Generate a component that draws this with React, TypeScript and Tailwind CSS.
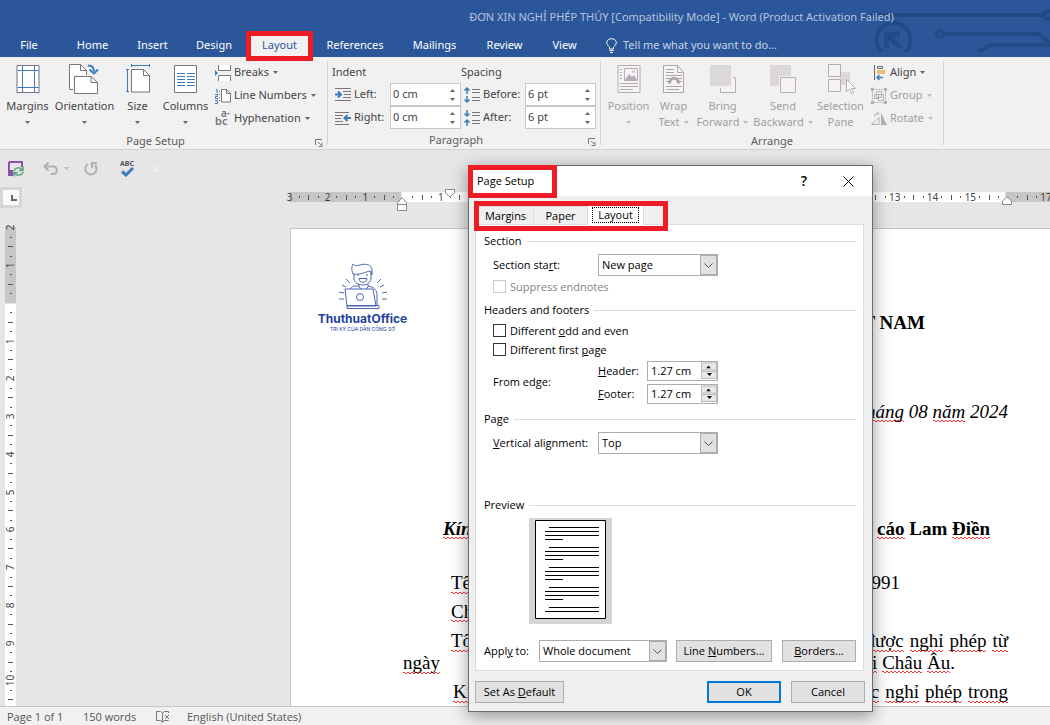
import type { ReactNode } from "react";

const menuTabs = [
  { name: "File", width: "w-[58px] mr-1" },
  { name: "Home", width: "w-[61px]" },
  { name: "Insert", width: "w-[59px]" },
  { name: "Design", width: "w-[64px]" },
  { name: "Layout", width: "w-[67px]" },
  { name: "References", width: "w-[84px]" },
  { name: "Mailings", width: "w-[75px]" },
  { name: "Review", width: "w-[65px]" },
  { name: "View", width: "w-[55px]" },
];

const rulerTop = ["3", "2", "1", "", "1", "2", "3", "4", "5", "6", "7", "8", "9", "10", "11", "12", "13", "14", "15", "", "17"];
const rulerSide = ["2", "1", "", "1", "2", "3", "4", "5", "6", "7", "8", "9", "10"];

function Caret({ className = "text-[#666]" }: { className?: string }) {
  return (
    <svg className={`inline-block h-[3px] w-[5px] shrink-0 ${className}`} viewBox="0 0 5 3">
      <path d="M0 0h5L2.5 3z" fill="currentColor" />
    </svg>
  );
}

function Launcher() {
  return (
    <svg className="h-2 w-2" viewBox="0 0 8 8" fill="none" stroke="#777">
      <path d="M.5 6V.5H7M3 3l3 3M7 3.5V7.5H3.5" />
    </svg>
  );
}

/* ---------- ribbon ---------- */

function Group({ title, width, launcher, children }: { title: string; width: string; launcher?: boolean; children: ReactNode }) {
  return (
    <section className={`flex shrink-0 flex-col border-r border-[#d2d2d2] ${width}`}>
      <div className="flex h-[71px]">{children}</div>
      <div className="relative mt-[1px] flex h-4 items-center justify-center pt-1 text-[#5c5c5c]">
        <span className={launcher ? "pr-4" : ""}>{title}</span>
        {launcher && (
          <button aria-label={`${title} settings`} className="absolute right-1 top-2 flex">
            <Launcher />
          </button>
        )}
      </div>
    </section>
  );
}

function BigButton({ icon, label, second, width, disabled, noCaret }: {
  icon: ReactNode;
  label: string;
  second?: string;
  width: string;
  disabled?: boolean;
  noCaret?: boolean;
}) {
  return (
    <button
      disabled={disabled}
      className={`flex shrink-0 flex-col items-center whitespace-nowrap pt-[3px] ${width} ${disabled ? "text-[#a19fa1]" : "text-[#444]"}`}
    >
      <span className="h-8">{icon}</span>
      <span className="mt-[2px] h-4 leading-4">{label}</span>
      <span className="flex h-4 items-center justify-center gap-1 leading-4">
        {second}
        {!noCaret && <Caret className={disabled ? "text-[#bbb]" : "text-[#666]"} />}
      </span>
    </button>
  );
}

function SmallButton({ icon, label, disabled }: { icon: ReactNode; label: string; disabled?: boolean }) {
  return (
    <button disabled={disabled} className={`flex h-[23px] items-center whitespace-nowrap ${disabled ? "text-[#a19fa1]" : "text-[#444]"}`}>
      <span className="mr-[2px] w-[17px]">{icon}</span>
      {label}
      <Caret className={disabled ? "ml-1 text-[#bbb]" : "ml-1 text-[#666]"} />
    </button>
  );
}

function RibbonSpin({ icon, label, value, id, labelWidth }: { icon: ReactNode; label: string; value: string; id: string; labelWidth: string }) {
  return (
    <div className="flex h-[23px] items-center">
      {icon}
      <label htmlFor={id} className={`ml-[3px] ${labelWidth}`}>
        {label}
      </label>
      <div className="flex h-[23px] w-[71px] items-center border border-[#c6c6c6] bg-white">
        <input id={id} defaultValue={value} className="w-[59px] pl-[2px] text-[#444] outline-none" />
        <span className="flex flex-col gap-[6px] text-[#666]">
          <button aria-label={`Increase ${label}`} className="flex rotate-180">
            <Caret />
          </button>
          <button aria-label={`Decrease ${label}`} className="flex">
            <Caret />
          </button>
        </span>
      </div>
    </div>
  );
}

function MarginsIcon() {
  return (
    <svg className="h-8 w-8" viewBox="0 0 32 32" fill="none">
      <path d="M5 1.5h22v27H5z" fill="#fff" stroke="#777" />
      <path d="M10.5 2v26M22.5 2v26M5.5 6.5h21M5.5 23.5h21" stroke="#3f7abf" />
    </svg>
  );
}

function OrientationIcon() {
  return (
    <svg className="h-8 w-8" viewBox="0 0 32 32" fill="none">
      <path d="M.5.5h11l6 6V25.500H.5z" fill="#fff" stroke="#777" />
      <path d="M11.500.5v6h6" stroke="#777" />
      <path d="M4 11h19v20H4z" fill="#f1f1f1" />
      <path d="M5.500 12.500H22l6.500 6V29.500h-23z" fill="#fff" stroke="#777" />
      <path d="M22 12.500v6h6.500" stroke="#777" />
      <path d="M19 1.500c4 0 6 2 6 6" stroke="#3f7abf" strokeWidth="2" />
      <path d="M20.500 5.500l4.500 4 4-4" stroke="#3f7abf" strokeWidth="2" />
    </svg>
  );
}

function SizeIcon() {
  return (
    <svg className="h-8 w-8" viewBox="0 0 32 32" fill="none">
      <path d="M9.500 5.500h12l6 6v16.500h-18z" fill="#fff" stroke="#777" />
      <path d="M21.500 5.500v6h6" stroke="#777" />
      <path d="M9.500 1.500h18M9.500 0v3M27.500 0v3M5.500 5.500v22M4 5.500h3M4 27.500h3" stroke="#3f7abf" />
    </svg>
  );
}

function ColumnsIcon() {
  return (
    <svg className="h-8 w-8" viewBox="0 0 32 32" fill="none">
      <path d="M4.500 1.500h22v27h-22z" fill="#fff" stroke="#777" />
      <path d="M7 9.500h8M7 12.500h8M7 15.500h8M7 18.500h8M7 21.500h8M17 9.500h8M17 12.500h8M17 15.500h8M17 18.500h8M17 21.500h8" stroke="#3f7abf" />
    </svg>
  );
}

function BreaksIcon() {
  return (
    <svg className="h-4 w-4" viewBox="0 0 16 16" fill="none">
      <path d="M3.500 0v5.500h12V0M3.500 16v-5.500h12V16" fill="#fff" stroke="#777" />
      <path d="M0 5v6l3-3z" fill="#3f7abf" />
    </svg>
  );
}

function LineNumbersIcon() {
  return (
    <svg className="h-4 w-4" viewBox="0 0 16 16" fill="none">
      <path d="M6.500 1.500h5l4 4v8.500h-9z" fill="#fff" stroke="#777" />
      <path d="M11.500 1.500v4h4" stroke="#777" />
      <path d="M1 1.500h1V5M0 6.500h2.500v2H.5V10.500H3M0 12.500h2.500v3H0" stroke="#3f7abf" />
      <path d="M4.500 3v12" stroke="#777" strokeDasharray="1 2" />
    </svg>
  );
}

function HyphenationIcon() {
  return (
    <span className="relative block h-4 w-4 text-[11px] font-semibold leading-3 text-[#777]">
      <span className="absolute left-0 top-1">bc</span>
      <span className="absolute left-[6px] -top-1 text-[10px]">a-</span>
    </span>
  );
}

function IndentIcon({ right }: { right?: boolean }) {
  return (
    <svg className="h-4 w-4" viewBox="0 0 16 16" fill="none">
      {right ? (
        <>
          <path d="M0 2.500h14M0 5.500h8M0 8.500h6M0 11.500h8M0 14.500h14" stroke="#777" />
          <path d="M16 8h-5M12.500 5L9.500 8l3 3" stroke="#3f7abf" strokeWidth="2" />
        </>
      ) : (
        <>
          <path d="M0 1.500h16M8 4.500h8M9 7.500h7M8 10.500h8M0 13.500h16" stroke="#777" />
          <path d="M0 7.500h5M3 4.500l3 3-3 3" stroke="#3f7abf" strokeWidth="2" />
        </>
      )}
    </svg>
  );
}

function SpacingIcon({ after }: { after?: boolean }) {
  return (
    <svg className="h-4 w-4" viewBox="0 0 16 16" fill="none">
      <path d="M8 2.500h8M8 5.500h8M8 10.500h8M8 13.500h8" stroke="#777" />
      {after ? (
        <path d="M3 0v6M.5 3.500L3 6l2.500-2.500M3 16v-6M.5 12.500L3 10l2.500 2.500" stroke="#3f7abf" strokeWidth="1.500" />
      ) : (
        <path d="M3 1v6M.5 3.500L3 1l2.500 2.500M3 9v6M.5 12.500L3 15l2.500-2.500" stroke="#3f7abf" strokeWidth="1.500" />
      )}
    </svg>
  );
}

function PositionIcon() {
  return (
    <svg className="h-8 w-8" viewBox="0 0 32 32" fill="none" stroke="#b3aeb3">
      <path d="M5 1.500h22v27H5z" fill="#f6f2f6" />
      <path d="M11.500 4.500h13v12h-13z" />
      <path d="M12 16l4-6 3 3 2-2 3 5z" fill="#b3aeb3" stroke="none" />
      <circle cx="20.500" cy="7.500" r="1" />
      <path d="M7 5.500h2M7 8.500h2M7 11.500h2M7 14.500h2M7 19.500h18M7 22.500h18M7 25.500h13" />
    </svg>
  );
}

function WrapIcon() {
  return (
    <svg className="h-8 w-8" viewBox="0 0 32 32" fill="none" stroke="#aba7ab">
      <path d="M5.500 1.500h14l6 7v20h-20z" fill="#f6f2f6" />
      <path d="M19.500 1.500v7h6" />
      <path d="M8 5.500h8M8 8.500h8M8 11.500h16M8 14.500h4M20 14.500h4M8 17.500h3M21 17.500h3M8 22.500h16M8 25.500h13" />
      <path d="M11.500 19.500c0-7 9-7 9 0" strokeWidth="3" />
    </svg>
  );
}

function BringIcon() {
  return (
    <svg className="h-8 w-8" viewBox="0 0 32 32" fill="none">
      <path d="M13.500 13.500h15v15h-15z" fill="#f6f2f6" stroke="#b3aeb3" />
      <path d="M2 0h24v24H2z" fill="#f1f1f1" />
      <path d="M3 1h21v21H3z" fill="#dcd7db" />
    </svg>
  );
}

function SendIcon() {
  return (
    <svg className="h-8 w-8" viewBox="0 0 32 32" fill="none">
      <path d="M3 1h21v21H3z" fill="#dcd7db" />
      <path d="M12 12h18v18H12z" fill="#f1f1f1" />
      <path d="M13.500 13.500h15v15h-15z" fill="#f6f2f6" stroke="#b3aeb3" />
    </svg>
  );
}

function SelectionIcon() {
  return (
    <svg className="h-8 w-8" viewBox="0 0 32 32" fill="none" stroke="#b3aeb3">
      <path d="M12 8h13v13H15v-8h-3z" fill="#dcd7db" stroke="none" />
      <path d="M3.500.5h12v12h-12zM3.500 15.500h12v12h-12z" fill="#f6f2f6" />
      <path d="M21.500 15.500v12l3-2.500 2 4.500 2-1-2-4h4z" fill="#fff" />
    </svg>
  );
}

function AlignIcon() {
  return (
    <svg className="h-4 w-4" viewBox="0 0 16 16" fill="none">
      <path d="M3.500 0v15" stroke="#666" />
      <path d="M6.500 1.500h5v2h-5z" stroke="#666" />
      <path d="M6 5h8v4H6z" fill="#eabf76" />
      <path d="M12 12.500H6M8.500 10L6 12.500 8.500 15" stroke="#3f7abf" strokeWidth="1.500" />
    </svg>
  );
}

function GroupIcon() {
  return (
    <svg className="h-4 w-4" viewBox="0 0 16 16" fill="none" stroke="#b3aeb3">
      <path d="M1.500 1.500h13v13h-13z" strokeDasharray="2 1" />
      <path d="M5.500 3.500h5v6h-5zM7.500 6.500h5v6h-5zM3.500 6.500h4v4h-4z" />
      <path d="M0 0h3v3H0zM13 0h3v3h-3zM0 13h3v3H0zM13 13h3v3h-3z" fill="#b3aeb3" stroke="none" />
    </svg>
  );
}

function RotateIcon() {
  return (
    <svg className="h-4 w-4" viewBox="0 0 16 16" fill="none" stroke="#b3aeb3">
      <path d="M.5 13.500h7.500v-7z" />
      <path d="M10 2v12h6z" fill="#b3aeb3" stroke="none" />
      <path d="M3.500 6c0-3 1-3.500 4-3.500M6 .5l2 2-2 2" />
    </svg>
  );
}

function Header() {
  return (
    <header className="relative h-[57px] shrink-0 bg-[#2b579a] text-white">
      <svg className="absolute right-0 top-0 h-[52px] w-[180px]" viewBox="0 0 180 52" fill="none" stroke="#234a86" strokeWidth="4">
        <circle cx="23.500" cy="40" r="17" />
        <path d="M16 34.500h14M16.500 33v15M17 35l14 13" strokeWidth="5" />
        <circle cx="3" cy="15" r="3" fill="#234a86" stroke="none" />
        <path d="M3 15h172" />
        <circle cx="178" cy="15" r="4" />
        <circle cx="69.500" cy="34" r="3.500" strokeWidth="3" />
        <path d="M73 34h95l14 10M108 52l12-7h60" />
      </svg>
      <div className="relative flex h-[31px] items-center justify-center whitespace-nowrap pl-[313px] pt-[3px] text-[#b3c4de]">
        ĐƠN XIN NGHỈ PHÉP THÚY [Compatibility Mode] - Word (Product Activation Failed)
      </div>
      <nav className="relative flex h-[26px]">
        {menuTabs.map((tab) =>
          tab.name === "Layout" ? (
            <button key={tab.name} className={`z-10 h-[30px] shrink-0 border-5 border-[#ee1c24] bg-[#f1f1f1] pb-[2px] text-[#2b579a] ${tab.width}`}>
              {tab.name}
            </button>
          ) : (
            <button key={tab.name} className={`h-7 shrink-0 ${tab.width}`}>
              {tab.name}
            </button>
          )
        )}
        <button className="ml-[14px] flex h-7 items-center gap-[6px] whitespace-nowrap text-[#c5d2e6]">
          <svg className="h-[15px] w-[11px]" viewBox="0 0 11 15" fill="none" stroke="#fff">
            <path d="M3.500 11V9C.5 6.500.5 4.500 1 3.500 2-.2 9-.2 10 3.500c.5 1 .5 3-2.500 5.500v2zM3.500 12.500h4M4 14.500h3" />
          </svg>
          Tell me what you want to do...
        </button>
      </nav>
    </header>
  );
}

function Ribbon() {
  return (
    <div className="flex h-[93px] shrink-0 border-b border-[#d2d2d2] bg-[#f1f1f1] pb-1 pt-1 text-[#444]">
      <Group title="Page Setup" width="w-[328px]" launcher>
        <BigButton icon={<MarginsIcon />} label="Margins" width="w-[55px]" />
        <BigButton icon={<OrientationIcon />} label="Orientation" width="w-[59px]" />
        <BigButton icon={<SizeIcon />} label="Size" width="w-[47px]" />
        <BigButton icon={<ColumnsIcon />} label="Columns" width="w-[49px]" />
        <div className="ml-[5px] flex flex-col">
          <SmallButton icon={<BreaksIcon />} label="Breaks" />
          <SmallButton icon={<LineNumbersIcon />} label="Line Numbers" />
          <SmallButton icon={<HyphenationIcon />} label="Hyphenation" />
        </div>
      </Group>
      <Group title="Paragraph" width="w-[273px]" launcher>
        <div className="flex w-[133px] flex-col pl-[7px]">
          <h3 className="-ml-[3px] h-[22px] leading-[22px]">Indent</h3>
          <RibbonSpin id="indent-left" icon={<IndentIcon />} label="Left:" value="0 cm" labelWidth="w-[36px]" />
          <RibbonSpin id="indent-right" icon={<IndentIcon right />} label="Right:" value="0 cm" labelWidth="w-[36px]" />
        </div>
        <div className="flex flex-col pl-[3px]">
          <h3 className="-ml-[3px] h-[22px] leading-[22px]">Spacing</h3>
          <RibbonSpin id="space-before" icon={<SpacingIcon />} label="Before:" value="6 pt" labelWidth="w-[42px]" />
          <RibbonSpin id="space-after" icon={<SpacingIcon after />} label="After:" value="6 pt" labelWidth="w-[42px]" />
        </div>
      </Group>
      <Group title="Arrange" width="w-[343px]">
        <BigButton icon={<PositionIcon />} label="Position" width="w-[55px]" disabled />
        <BigButton icon={<WrapIcon />} label="Wrap" second="Text" width="w-[35px]" disabled />
        <BigButton icon={<BringIcon />} label="Bring" second="Forward" width="w-[63px]" disabled />
        <BigButton icon={<SendIcon />} label="Send" second="Backward" width="w-[58px]" disabled />
        <BigButton icon={<SelectionIcon />} label="Selection" second="Pane" width="w-[57px]" disabled noCaret />
        <div className="ml-[2px] flex flex-col">
          <SmallButton icon={<AlignIcon />} label="Align" />
          <SmallButton icon={<GroupIcon />} label="Group" disabled />
          <SmallButton icon={<RotateIcon />} label="Rotate" disabled />
        </div>
      </Group>
    </div>
  );
}

function QuickAccess() {
  return (
    <div className="flex h-[37px] shrink-0 items-center pl-2">
      <button aria-label="Save">
        <svg className="h-4 w-4" viewBox="0 0 16 16" fill="none">
          <path d="M1 1h13v5M1 1v13h4" stroke="#8a50ab" strokeWidth="2" />
          <path d="M2 9h3v5H2z" fill="#8a50ab" />
          <path d="M6 10c1-4 7-4 8-1M15 5.500V9.500h-4M15 11c-1 4-7 4-8 1M6 15.500v-4h4" stroke="#5fa582" strokeWidth="1.500" />
        </svg>
      </button>
      <button aria-label="Undo" className="ml-[19px] flex items-center gap-[5px]">
        <svg className="h-4 w-4" viewBox="0 0 16 16" fill="none" stroke="#b1b1b1" strokeWidth="2">
          <path d="M5.500 1.500L1.500 5.500l4 4M1.500 5.500H10c5 0 5 7.500 0 7.500H8" />
        </svg>
        <Caret className="text-[#bbb]" />
      </button>
      <button aria-label="Repeat" className="ml-[14px]">
        <svg className="h-4 w-4" viewBox="0 0 16 16" fill="none" stroke="#b1b1b1" strokeWidth="2">
          <path d="M5 3a5.600 5.600 0 1 0 7 1M9 7V2h5" />
        </svg>
      </button>
      <button aria-label="Spelling" className="ml-5 flex w-4 flex-col items-center text-[7px] font-bold leading-[7px] text-[#555]">
        ABC
        <svg className="h-[10px] w-[13px]" viewBox="0 0 13 10" fill="none">
          <path d="M1 4.500l4 3.500 7-7" stroke="#3f7abf" strokeWidth="3" />
        </svg>
      </button>
      <button aria-label="Customize" className="ml-[18px] flex flex-col items-center gap-[2px]">
        <span className="h-px w-[5px] bg-[#f4f4f4]" />
        <Caret className="text-[#f4f4f4]" />
      </button>
    </div>
  );
}

/* ---------- rulers ---------- */

function TopRuler() {
  return (
    <div className="flex h-[21px] shrink-0 items-start">
      <button aria-label="Tab stop" className="flex h-[21px] w-[22px] shrink-0 items-center justify-center bg-[#d6d6d6]">
        <span className="flex h-[15px] w-4 items-end justify-end bg-[#fafafa] pb-1 pr-[2px]">
          <span className="h-[6px] w-[6px] border-b-2 border-l-2 border-[#666]" />
        </span>
      </button>
      <div className="relative ml-[263px] mt-[5px] h-[10px] min-w-0 flex-1 bg-[linear-gradient(to_right,#e6e6e6_4px,#c6c6c6_4px,#c6c6c6_116px,#fff_117px,#fff_720px,#c6c6c6_721px)]">
        <div className="flex h-[10px] w-[794px] text-[10px] leading-[10px] text-[#444]">
          {rulerTop.map((n, i) => (
            <div key={i} className="grid flex-1 basis-0 grid-cols-4 items-center">
              <span className="flex justify-center">{n}</span>
              <span className="h-[2px] w-px justify-self-center bg-[#555]" />
              <span className="h-[5px] w-px justify-self-center bg-[#555]" />
              <span className="h-[2px] w-px justify-self-center bg-[#555]" />
            </div>
          ))}
        </div>
        <svg className="absolute left-[112px] top-[5px] h-[14px] w-[10px]" viewBox="0 0 10 14" fill="#fff" stroke="#888">
          <path d="M.5 13.500v-8L5 .8l4.500 4.700v8zM.5 7.500h9" />
        </svg>
        <svg className="absolute left-[160px] -top-[3px] h-[9px] w-[10px]" viewBox="0 0 10 9" fill="#fff" stroke="#888">
          <path d="M.5.500h9v3.500L5 8 .5 4z" />
        </svg>
        <svg className="absolute left-[717px] top-1 h-[9px] w-[10px]" viewBox="0 0 10 9" fill="#fff" stroke="#888">
          <path d="M.5 8.500V5L5 .8 9.500 5v3.500z" />
        </svg>
      </div>
    </div>
  );
}

function SideRuler() {
  return (
    <div className="ml-[5px] mt-[19px] w-[11px] shrink-0 bg-[linear-gradient(to_bottom,#c6c6c6_76px,#fff_77px)]">
      <div className="-mt-1 flex h-[491px] flex-col text-[10px] leading-[9px] text-[#444]">
        {rulerSide.map((n, i) => (
          <div key={i} className="grid flex-1 basis-0 grid-rows-4 items-center justify-items-center">
            <span className="flex h-[9px] items-center -rotate-90">{n}</span>
            <span className="h-px w-[2px] bg-[#555]" />
            <span className="h-px w-[5px] bg-[#555]" />
            <span className="h-px w-[2px] bg-[#555]" />
          </div>
        ))}
      </div>
    </div>
  );
}

/* ---------- document ---------- */

// two offset rows of dashes make the spelling squiggle
function Typo({ children }: { children: ReactNode }) {
  return (
    <span className="bg-[linear-gradient(90deg,#f33_50%,transparent_50%),linear-gradient(90deg,transparent_50%,#f33_50%)] bg-[length:4px_1px,4px_1px] bg-[position:0_calc(100%_-_1px),0_100%] bg-repeat-x">
      {children}
    </span>
  );
}

function Logo() {
  return (
    <div className="flex w-[91px] flex-col items-center text-[#1c429c]">
      <svg className="h-[46px] w-12" viewBox="0 0 48 46" fill="none" stroke="#4a67b4">
        <path d="M14 11C12 6 13 3 14 1c2 2 3 2 7 1 6-2 12 0 12 5v5M14 11c8 1 12-2 17-3l2 4M15 11v5c1 7 15 9 17 0v-8" />
        <path d="M20 15.500h8c0 5-8 5-8 0zM18 12h2M27 12h2M20 21v3l5 4 4-4v-3M11 26c2-3 5-3 9-3M29 23c6 1 9 4 9 9v10" />
        <path d="M6 26h28l3 17H8zM8 42.500h32v3H8z" fill="#fff" />
        <circle cx="21" cy="34" r="3.500" />
        <path d="M7 16l4 4M3 22l4 2M0 29l5 1M0 36h5M42 16l-4 4M45 22l-4 2M48 29l-5 1M48 36h-5" />
      </svg>
      <span className="mt-[3px] font-['Inter',sans-serif] text-xs font-bold leading-[14px]">ThuthuatOffice</span>
      <span className="whitespace-nowrap font-['Inter',sans-serif] text-[5px] leading-[6px]">TRI KỶ CỦA DÂN CÔNG SỞ</span>
    </div>
  );
}

function Document() {
  return (
    <article className="ml-[274px] mt-5 min-w-0 flex-1 overflow-hidden border-l border-t border-[#c6c6c6] bg-white pl-[112px] pr-[42px] font-['Liberation_Serif',serif] text-[19px] leading-[22px] text-black">
      <div className="-ml-[86px] h-[83px] pt-[34px]">
        <Logo />
      </div>
      <h2 className="pr-[83px] text-right font-bold">VIỆT NAM</h2>
      <p className="mt-[67px] text-right italic">
        <Typo>tháng</Typo> 08 <Typo>năm</Typo> 2024
      </p>
      <h3 className="mt-[95px] flex justify-between pl-10 pr-[18px] font-bold">
        <i>
          <Typo>Kính</Typo>
        </i>
        <span>
          <Typo>Quảng</Typo> <Typo>cáo</Typo> Lam <Typo>Điền</Typo>
        </span>
      </h3>
      <p className="mt-8 flex justify-between pl-12 pr-[108px]">
        <Typo>Tên</Typo>
        <span>1991</span>
      </p>
      <p className="mt-[7px] pl-12">
        <Typo>Chị</Typo>
      </p>
      <p className="mt-[7px] flex justify-between pl-12">
        <Typo>Tôi</Typo>
        <span className="flex gap-[6px]">
          <Typo>được</Typo> <Typo>nghỉ</Typo> <Typo>phép</Typo> <Typo>từ</Typo>
        </span>
      </p>
      <p className="flex justify-between pr-[53px]">
        <Typo>ngày</Typo>
        <span>
          <Typo>tại</Typo> <Typo>Châu</Typo> <Typo>Âu</Typo>.
        </span>
      </p>
      <p className="mt-[7px] flex justify-between pl-[50px]">
        <Typo>Kí</Typo>
        <span className="flex gap-[6px]">
          <Typo>được</Typo> <Typo>nghỉ</Typo> <Typo>phép</Typo> <Typo>trong</Typo>
        </span>
      </p>
    </article>
  );
}

/* ---------- dialog ---------- */

const dialogButton = "h-[22px] border border-[#adadad] bg-[#e1e1e1]";

function Heading({ children }: { children: ReactNode }) {
  return (
    <h3 className="flex h-4 items-center gap-[5px]">
      {children}
      <span className="h-px flex-1 bg-[#dcdcdc]" />
    </h3>
  );
}

function Dropdown({ id, value, width }: { id: string; value: string; width: string }) {
  return (
    <span className={`relative block h-[22px] border border-[#abadb3] bg-white ${width}`}>
      <select id={id} defaultValue={value} className="block h-5 w-full appearance-none pl-[3px] outline-none">
        <option>{value}</option>
      </select>
      <span className="pointer-events-none absolute right-0 top-0 flex h-5 w-[17px] items-center justify-center border border-[#abadb3] bg-[#e1e1e1]">
        <svg className="h-[5px] w-[9px]" viewBox="0 0 9 5" fill="none" stroke="#555">
          <path d="M.5.500l4 4 4-4" />
        </svg>
      </span>
    </span>
  );
}

function EdgeInput({ id, label }: { id: string; label: string }) {
  return (
    <div className="flex h-[23px] items-center">
      <label htmlFor={id} className="w-[49px]">
        <u>{label[0]}</u>
        {label.slice(1)}
      </label>
      <div className="flex h-5 w-[71px] border border-[#abadb3] bg-white">
        <input id={id} defaultValue="1.27 cm" className="w-[53px] pl-[3px] outline-none" />
        <span className="flex w-4 flex-col gap-px py-px">
          <button aria-label={`Increase ${label}`} className="flex flex-1 rotate-180 items-center justify-center border border-[#bbb] bg-[#e8e8e8]">
            <Caret className="text-black" />
          </button>
          <button aria-label={`Decrease ${label}`} className="flex flex-1 items-center justify-center border border-[#bbb] bg-[#e8e8e8]">
            <Caret className="text-black" />
          </button>
        </span>
      </div>
    </div>
  );
}

function Check({ children, disabled }: { children: ReactNode; disabled?: boolean }) {
  return (
    <label className={`flex h-[19px] items-center gap-1 pl-[9px] ${disabled ? "text-[#838383]" : ""}`}>
      <input
        type="checkbox"
        disabled={disabled}
        className={`h-[13px] w-[13px] appearance-none border bg-white ${disabled ? "border-[#ccc]" : "border-[#333]"}`}
      />
      <span>{children}</span>
    </label>
  );
}

function PreviewPage() {
  return (
    <div className="ml-[45px] mt-[5px] flex h-[106px] w-[83px] justify-center bg-[#d4d4d4] pb-1 pt-[2px]">
      <svg className="h-[99px] w-[71px]" viewBox="0 0 71 99" fill="none" stroke="#000">
        <path d="M.5.500h70v98H.500z" fill="#fff" />
        {[7, 27, 47, 67].map((y) => (
          <path key={y} d={`M14 ${y + 0.5}h50M10 ${y + 4.5}h54M10 ${y + 8.5}h54M10 ${y + 12.5}h18`} />
        ))}
        <path d="M14 87.500h50M10 91.500h54" />
      </svg>
    </div>
  );
}

function PageSetupDialog() {
  return (
    <div
      role="dialog"
      aria-label="Page Setup"
      className="absolute left-[468px] top-[165px] z-20 w-[405px] border border-[#6b6b6b] bg-[#f0f0f0] pb-2 font-['Open_Sans',sans-serif] text-[11px] leading-4 text-black shadow-[0_4px_16px_rgba(0,0,0,0.4)]"
    >
      <div className="flex h-[30px] items-center bg-white pl-2">
        <h2>Page Setup</h2>
        <button aria-label="Help" className="ml-auto mr-9 text-sm font-semibold">
          ?
        </button>
        <button aria-label="Close" className="mr-[18px]">
          <svg className="h-[11px] w-[11px]" viewBox="0 0 11 11" stroke="#000">
            <path d="M.5.500l10 10M10.500.500l-10 10" />
          </svg>
        </button>
      </div>
      <div className="flex h-7 items-end pl-[9px]">
        <button className="h-[18px] w-14 border-r border-t border-[#dcdcdc]">Margins</button>
        <button className="h-[18px] w-[53px] border-t border-[#dcdcdc]">Paper</button>
        <button className="z-10 -mb-px h-5 w-[57px] border-x border-[#dcdcdc] bg-white px-1">
          <span className="block h-4 border border-dotted border-black leading-[14px]">Layout</span>
        </button>
      </div>
      <div className="ml-[6px] mr-2 border border-[#dcdcdc] bg-white pb-2 pl-2 pr-[6px] pt-2">
        <Heading>Section</Heading>
        <div className="mt-[5px] flex h-[22px] items-center pl-[9px]">
          <label htmlFor="section-start" className="w-[105px]">
            Section sta<u>r</u>t:
          </label>
          <Dropdown id="section-start" value="New page" width="w-[120px]" />
        </div>
        <div className="mt-px">
          <Check disabled>Suppress endnotes</Check>
        </div>
        <div className="mb-[3px] mt-[6px]">
          <Heading>Headers and footers</Heading>
        </div>
        <Check>
          Different <u>o</u>dd and even
        </Check>
        <Check>
          Different first <u>p</u>age
        </Check>
        <div className="flex items-center pl-[9px]">
          <span className="w-[105px]">From edge:</span>
          <div>
            <EdgeInput id="edge-header" label="Header:" />
            <EdgeInput id="edge-footer" label="Footer:" />
          </div>
        </div>
        <div className="mt-[6px]">
          <Heading>Page</Heading>
        </div>
        <div className="mt-[5px] flex h-[22px] items-center pl-[9px]">
          <label htmlFor="vertical" className="w-[105px] whitespace-nowrap">
            <u>V</u>ertical alignment:
          </label>
          <Dropdown id="vertical" value="Top" width="w-[120px]" />
        </div>
        <div className="mt-[43px]">
          <Heading>Preview</Heading>
        </div>
        <PreviewPage />
        <div className="mt-4 flex items-center">
          <label htmlFor="apply" className="w-[55px]">
            Appl<u>y</u> to:
          </label>
          <Dropdown id="apply" value="Whole document" width="w-[128px]" />
          <button className={`ml-[9px] w-24 ${dialogButton}`}>
            Line <u>N</u>umbers...
          </button>
          <button className={`ml-[10px] w-[74px] ${dialogButton}`}>
            <u>B</u>orders...
          </button>
        </div>
      </div>
      <div className="ml-[6px] mr-[7px] mt-[10px] flex">
        <button className={`w-[89px] ${dialogButton}`}>
          Set As <u>D</u>efault
        </button>
        <button className="ml-auto h-[22px] w-[74px] border-2 border-[#0078d7] bg-[#e1e1e1] leading-[18px]">OK</button>
        <button className={`ml-[10px] w-[74px] ${dialogButton}`}>Cancel</button>
      </div>
      <span className="pointer-events-none absolute -left-px -top-px h-[33px] w-[89px] border-5 border-[#ee1c24]" />
      <span className="pointer-events-none absolute left-[5px] top-[35px] z-20 h-[30px] w-[194px] border-5 border-[#ee1c24]" />
    </div>
  );
}

function StatusBar() {
  return (
    <footer className="relative flex h-[19px] shrink-0 items-center border-t border-[#c6c6c6] bg-[#f1f1f1] pl-[7px] pt-[2px] font-['Open_Sans',sans-serif] text-[11px] text-[#555]">
      <span className="w-[76px]">Page 1 of 1</span>
      <span className="w-[73px]">150 words</span>
      <svg className="h-3 w-[14px]" viewBox="0 0 14 12" fill="none" stroke="#777">
        <path d="M6.500 11L4.500 9.500h-4V.500h4l2 1.500zM6.500 2L8.500.500h4V2M6.500 11l2-1.500h4M9 4l4 4M13 4L9 8" />
      </svg>
      <span className="ml-[17px]">English (United States)</span>
    </footer>
  );
}

export default function App() {
  return (
    <div className="relative flex h-screen flex-col overflow-hidden bg-[#e6e6e6] font-['Noto_Sans',sans-serif] text-[11px]">
      <Header />
      <Ribbon />
      <QuickAccess />
      <TopRuler />
      <main className="flex min-h-0 flex-1">
        <SideRuler />
        <Document />
      </main>
      <StatusBar />
      <PageSetupDialog />
    </div>
  );
}
